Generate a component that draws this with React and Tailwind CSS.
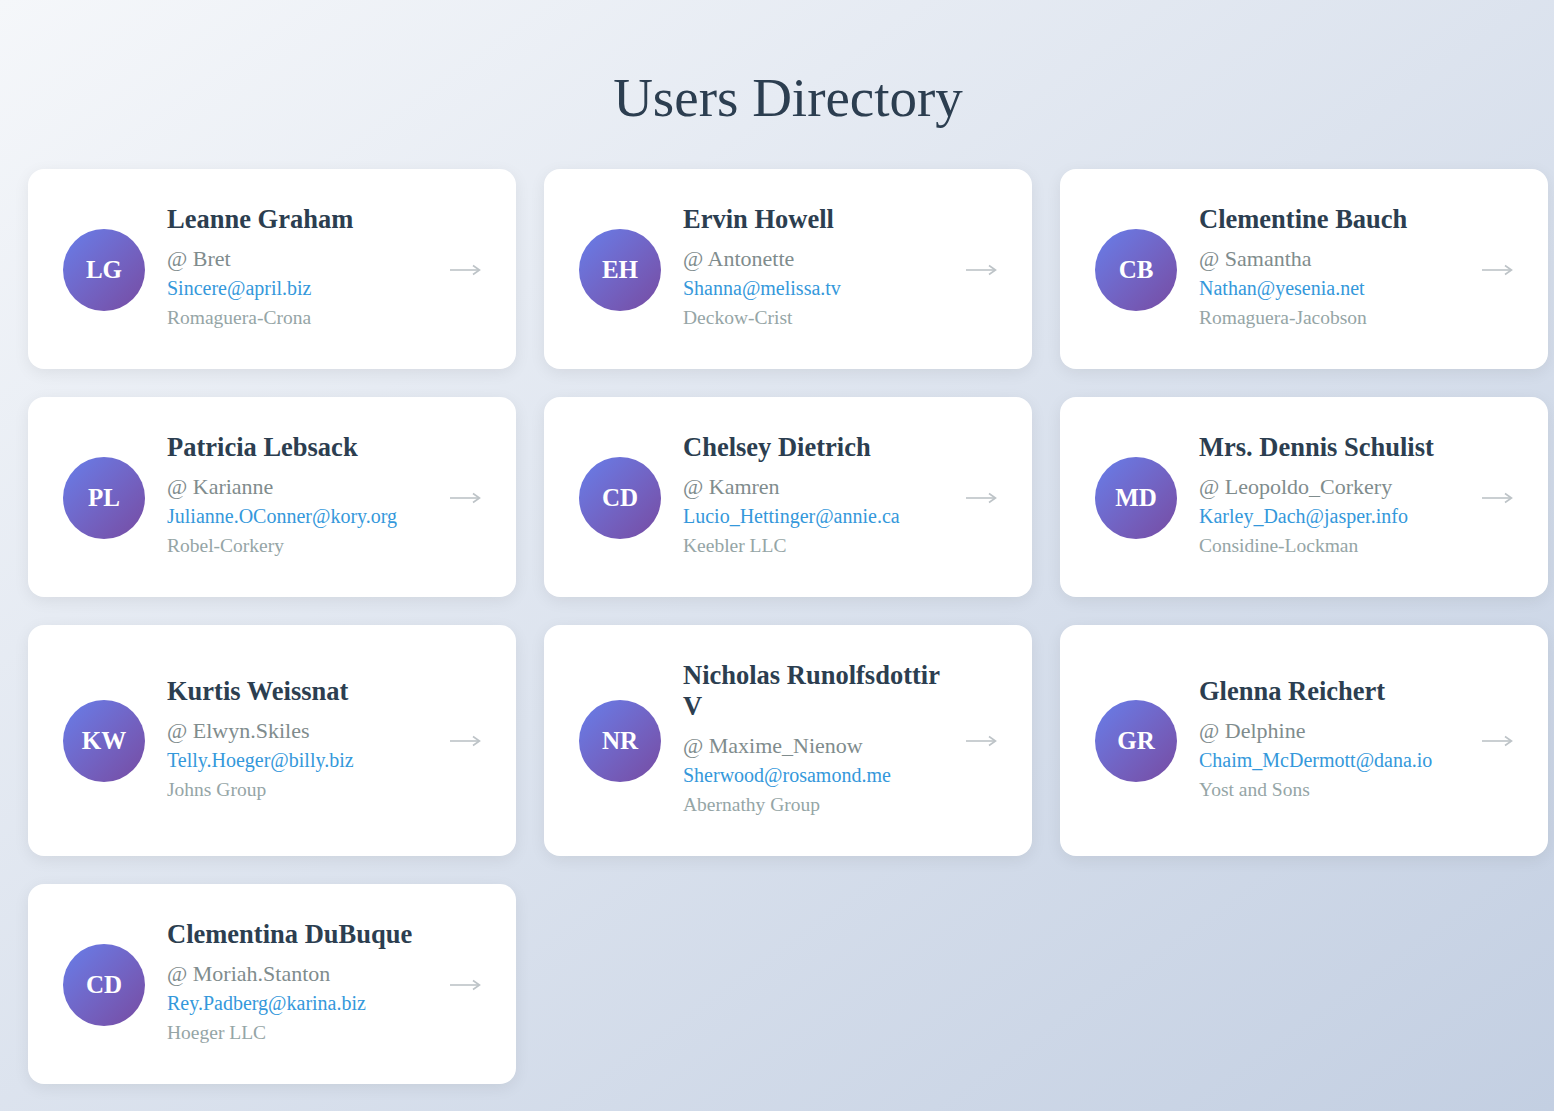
import React from "react";

const users = [
  { name: "Leanne Graham", username: "Bret", email: "Sincere@april.biz", company: "Romaguera-Crona" },
  { name: "Ervin Howell", username: "Antonette", email: "Shanna@melissa.tv", company: "Deckow-Crist" },
  { name: "Clementine Bauch", username: "Samantha", email: "Nathan@yesenia.net", company: "Romaguera-Jacobson" },
  { name: "Patricia Lebsack", username: "Karianne", email: "Julianne.OConner@kory.org", company: "Robel-Corkery" },
  { name: "Chelsey Dietrich", username: "Kamren", email: "Lucio_Hettinger@annie.ca", company: "Keebler LLC" },
  { name: "Mrs. Dennis Schulist", username: "Leopoldo_Corkery", email: "Karley_Dach@jasper.info", company: "Considine-Lockman" },
  { name: "Kurtis Weissnat", username: "Elwyn.Skiles", email: "Telly.Hoeger@billy.biz", company: "Johns Group" },
  { name: "Nicholas Runolfsdottir V", username: "Maxime_Nienow", email: "Sherwood@rosamond.me", company: "Abernathy Group" },
  { name: "Glenna Reichert", username: "Delphine", email: "Chaim_McDermott@dana.io", company: "Yost and Sons" },
  { name: "Clementina DuBuque", username: "Moriah.Stanton", email: "Rey.Padberg@karina.biz", company: "Hoeger LLC" },
];

// first letter of the first two words
const initials = (name) =>
  name
    .split(" ")
    .slice(0, 2)
    .map((w) => w[0])
    .join("")
    .toUpperCase();

const Arrow = () => (
  <svg width="32" height="12" viewBox="0 0 32 12" fill="none" className="shrink-0 mt-[4px]">
    <path d="M1 6H30" stroke="#bdc3c7" strokeWidth="1.6" />
    <path d="M24 1.5L30.5 6L24 10.5" stroke="#bdc3c7" strokeWidth="1.6" />
  </svg>
);

const UserCard = ({ user }) => {
  return (
    <div className="bg-white rounded-[16px] shadow-[0_4px_16px_rgba(0,0,0,0.07)] pl-[35px] pr-[35px] pt-[35px] pb-[38px] flex items-center gap-[22px]">
      {/* avatar */}
      <div className="w-[82px] h-[82px] mt-[4px] shrink-0 rounded-full bg-gradient-to-br from-[#667eea] to-[#764ba2] flex items-center justify-center text-white text-[25px] font-bold">
        {initials(user.name)}
      </div>

      {/* details */}
      <div className="flex-1 min-w-0">
        <h2 className="text-[26.5px] leading-[31px] font-bold text-[#2c3e50] mb-[10px]">{user.name}</h2>
        <p className="text-[22px] leading-[28px] text-[#7f8c8d] mb-[2px]">@ {user.username}</p>
        <p className="text-[20px] leading-[26px] text-[#3498db] mb-[4px]">{user.email}</p>
        <p className="text-[19.5px] leading-[26px] text-[#95a5a6]">{user.company}</p>
      </div>

      <Arrow />
    </div>
  );
};

const App = () => {
  return (
    <div className="min-h-screen bg-gradient-to-br from-[#f5f7fa] to-[#c3cfe2] font-['Liberation_Serif','Times_New_Roman',serif] pb-[28px]">
      <div className="ml-[28px] w-[1520px]">
        <h1 className="text-[55px] leading-none font-normal text-[#2c3e50] text-center pt-[70px] pb-[44px]">
          Users Directory
        </h1>

        <div className="grid grid-cols-[488px_488px_488px] gap-[28px]">
          {users.map((user) => (
            <UserCard key={user.email} user={user} />
          ))}
        </div>
      </div>
    </div>
  );
};

export default App;
